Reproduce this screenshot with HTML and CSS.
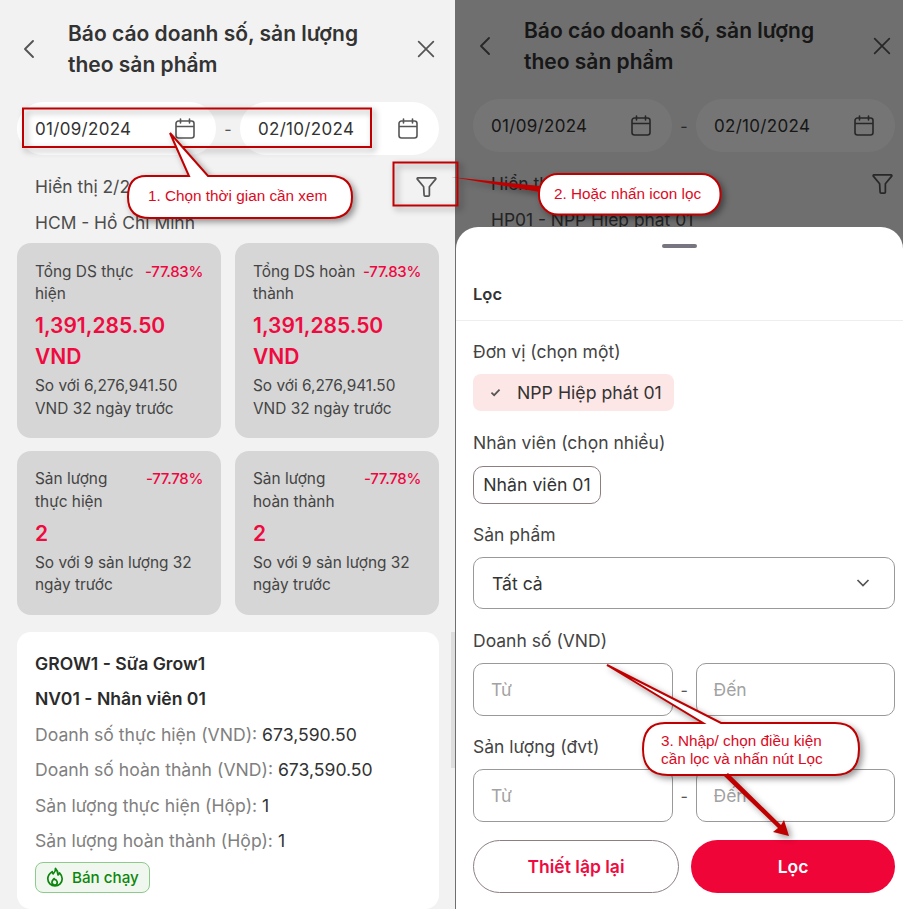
FILE: index.html
```html
<!DOCTYPE html>
<html lang="en">
<head>
    <meta charset="UTF-8">
    <meta name="viewport" content="width=device-width, initial-scale=1.0">
    <title>Báo cáo doanh số, sản lượng theo sản phẩm</title>
    <link rel="stylesheet" href="styles.css">
</head>
<body>
    <svg width="0" height="0" class="icon-defs">
        <defs>
            <symbol id="i-back" viewBox="0 0 24 24"><path d="M15 4 7 12l8 8" fill="none" stroke="currentColor" stroke-width="1.9" stroke-linecap="round" stroke-linejoin="round"/></symbol>
            <symbol id="i-close" viewBox="0 0 24 24"><path d="M4 4 20 20M20 4 4 20" fill="none" stroke="currentColor" stroke-width="1.9" stroke-linecap="round"/></symbol>
            <symbol id="i-cal" viewBox="0 0 22 22"><path d="M4.5 3h13A2.5 2.5 0 0 1 20 5.500v12a2.500 2.500 0 0 1-2.500 2.500h-13A2.500 2.500 0 0 1 2 17.500v-12A2.500 2.500 0 0 1 4.500 3ZM2 8.500h18M6.500 1v4M15.500 1v4" fill="none" stroke="currentColor" stroke-width="1.6" stroke-linecap="round"/></symbol>
            <symbol id="i-filter" viewBox="0 0 24 24"><path d="M3 3h18a.8.8 0 0 1 .6 1.300L15 12.200V21a1 1 0 0 1-1 1h-3.500a1 1 0 0 1-1-.9l-.5-8.900L2.400 4.300A.8.8 0 0 1 3 3Z" fill="none" stroke="currentColor" stroke-width="1.8" stroke-linejoin="round"/></symbol>
        </defs>
    </svg>

    <div class="page">
        <!-- left phone -->
        <section class="phone phone-left">
            <header class="top">
                <svg class="icon-back"><use href="#i-back"/></svg>
                <h1>Báo cáo doanh số, sản lượng theo sản phẩm</h1>
                <svg class="icon-close"><use href="#i-close"/></svg>
            </header>
            <div class="dates">
                <div class="date">01/09/2024 <svg class="icon-cal"><use href="#i-cal"/></svg></div>
                <span class="dash">-</span>
                <div class="date">02/10/2024 <svg class="icon-cal"><use href="#i-cal"/></svg></div>
            </div>
            <div class="info">
                <div class="info-row">Hiển thị 2/2 <svg class="icon-filter"><use href="#i-filter"/></svg></div>
                <div class="info-row">HCM - Hồ Chí Minh</div>
            </div>

            <div class="stats">
                <div class="stat">
                    <div class="stat-top"><span>Tổng DS thực hiện</span><b>-77.83%</b></div>
                    <div class="stat-val">1,391,285.50 VND</div>
                    <p>So với 6,276,941.50 VND 32 ngày trước</p>
                </div>
                <div class="stat">
                    <div class="stat-top"><span>Tổng DS hoàn thành</span><b>-77.83%</b></div>
                    <div class="stat-val">1,391,285.50 VND</div>
                    <p>So với 6,276,941.50 VND 32 ngày trước</p>
                </div>
                <div class="stat">
                    <div class="stat-top"><span>Sản lượng thực hiện</span><b>-77.78%</b></div>
                    <div class="stat-val">2</div>
                    <p>So với 9 sản lượng 32 ngày trước</p>
                </div>
                <div class="stat">
                    <div class="stat-top"><span>Sản lượng hoàn thành</span><b>-77.78%</b></div>
                    <div class="stat-val">2</div>
                    <p>So với 9 sản lượng 32 ngày trước</p>
                </div>
            </div>

            <div class="product">
                <div class="product-title">GROW1 - Sữa Grow1</div>
                <div class="product-title">NV01 - Nhân viên 01</div>
                <div class="product-row"><span>Doanh số thực hiện (VND):</span> 673,590.50</div>
                <div class="product-row"><span>Doanh số hoàn thành (VND):</span> 673,590.50</div>
                <div class="product-row"><span>Sản lượng thực hiện (Hộp):</span> 1</div>
                <div class="product-row"><span>Sản lượng hoàn thành (Hộp):</span> 1</div>
                <div class="hot">
                    <svg class="icon-fire" viewBox="0 0 20 22"><path d="M10.500 1.500c.6 3-1 4.500-2.500 6-.6-.7-1-1.500-1.100-2.500C4 7 2 9.700 2 13a8 8 0 0 0 16 0c0-3-1.500-5-3-6.500-.4 1-.9 1.700-1.600 2.200-.3-3-1.100-5.600-2.900-7.200ZM10 20c-2 0-3.400-1.500-3.400-3.300 0-1.600 1.400-2.700 2.400-4 .4 1.100 1 1.500 1.800 1.200.4 1 1.700 1.600 1.700 3 0 1.700-1 3.100-2.500 3.100Z" fill="none" stroke="currentColor" stroke-width="1.900" stroke-linejoin="round"/></svg>
                    Bán chạy
                </div>
            </div>
            <div class="scrollbar"></div>
        </section>

        <!-- right phone, filter sheet open -->
        <section class="phone phone-right">
            <header class="top">
                <svg class="icon-back"><use href="#i-back"/></svg>
                <h1>Báo cáo doanh số, sản lượng theo sản phẩm</h1>
                <svg class="icon-close"><use href="#i-close"/></svg>
            </header>
            <div class="dates">
                <div class="date">01/09/2024 <svg class="icon-cal"><use href="#i-cal"/></svg></div>
                <span class="dash">-</span>
                <div class="date">02/10/2024 <svg class="icon-cal"><use href="#i-cal"/></svg></div>
            </div>
            <div class="info">
                <div class="info-row">Hiển thị 2/2 <svg class="icon-filter"><use href="#i-filter"/></svg></div>
                <div class="info-row">HP01 - NPP Hiệp phát 01</div>
            </div>
            <div class="dim"></div>

            <div class="sheet">
                <div class="handle"></div>
                <div class="sheet-title">Lọc</div>
                <div class="sheet-body">
                    <label class="lbl">Đơn vị (chọn một)</label>
                    <div class="chip-on">
                        <svg class="icon-check" viewBox="0 0 12 10"><path d="M1.500 5.200 4.500 8l6-6.200" fill="none" stroke="currentColor" stroke-width="1.900"/></svg>
                        NPP Hiệp phát 01
                    </div>
                    <label class="lbl">Nhân viên (chọn nhiều)</label>
                    <div class="chip">Nhân viên 01</div>
                    <label class="lbl">Sản phẩm</label>
                    <div class="select">Tất cả
                        <svg class="icon-down" viewBox="0 0 14 8"><path d="M1.500 1 7 6.500 12.500 1" fill="none" stroke="currentColor" stroke-width="1.700"/></svg>
                    </div>
                    <label class="lbl">Doanh số (VND)</label>
                    <div class="range"><div class="field">Từ</div><span class="dash">-</span><div class="field">Đến</div></div>
                    <label class="lbl">Sản lượng (đvt)</label>
                    <div class="range"><div class="field">Từ</div><span class="dash">-</span><div class="field">Đến</div></div>
                    <div class="actions">
                        <button class="btn-reset">Thiết lập lại</button>
                        <button class="btn-apply">Lọc</button>
                    </div>
                </div>
            </div>
        </section>

        <!-- red annotations drawn over both screenshots -->
        <svg class="marks" viewBox="0 0 903 909">
            <rect x="23" y="108.500" width="348" height="38.500"/>
            <rect x="393.500" y="162.500" width="64" height="43"/>
            <path d="M146 176H189L170 133 208 176H330Q352 176 352 197 352 218 330 218H150Q128 218 128 197 128 176 146 176Z"/>
            <path class="solid" d="M451 177 540 186V192Z"/>
            <rect class="box" x="539" y="174" width="181.500" height="40.500" rx="19"/>
            <path d="M665 723H703L607 665 721 723H835Q859 723 859 749 859 775 835 775H668Q643 775 643 749 643 723 665 723Z"/>
            <path class="solid" d="M724 776 728 773 781 825 784 820 789 836 773 832 778 828Z"/>
        </svg>
        <div class="note note-1">1. Chọn thời gian cần xem</div>
        <div class="note note-2">2. Hoặc nhấn icon lọc</div>
        <div class="note note-3">3. Nhập/ chọn điều kiện<br>cần lọc và nhấn nút Lọc</div>
    </div>
</body>
</html>
```

FILE: styles.css
```css
body {
    margin: 0;
    color: #333;
    font-family: "Inter", "Noto Sans", sans-serif;
    font-size: 16px;
    background: #f2f2f2;
}

.icon-defs {
    position: absolute;
}

.page {
    position: relative;
    display: flex;
    width: 903px;
    height: 909px;
    overflow: hidden;
}

.phone {
    position: relative;
    box-sizing: border-box;
    height: 909px;
    overflow: hidden;
    background: #f2f2f2;
}

.phone-left {
    width: 455px;
    padding: 17px 16px 0 17px;
}

.phone-right {
    width: 448px;
    padding: 14px 8px 0 18px;
}

.top {
    display: flex;
    align-items: center;
    height: 63px;
}

.top h1 {
    flex: 1;
    margin: 0 12px 0 26px;
    font-size: 21px;
    line-height: 31px;
    font-weight: 600;
    color: #333;
}

.icon-back {
    width: 24px;
    height: 24px;
    margin-left: 1px;
    color: #555;
    flex: none;
}

.icon-close {
    width: 22px;
    height: 22px;
    margin-right: 2px;
    color: #555;
    flex: none;
}

.dates {
    display: flex;
    align-items: center;
    gap: 8px;
    margin-top: 22px;
}

.dates .dash {
    width: 8px;
    text-align: center;
    color: #555;
}

.date {
    flex: 1;
    display: flex;
    align-items: center;
    justify-content: space-between;
    height: 53px;
    padding: 0 20px 0 18px;
    border-radius: 27px;
    background: #fff;
    font-size: 17px;
    letter-spacing: 0.3px;
}

.icon-cal {
    width: 22px;
    height: 22px;
    color: #555;
}

.info {
    margin-top: 13px;
    padding-left: 18px;
    font-size: 17.400px;
    color: #4d4d4d;
}

.info-row {
    display: flex;
    align-items: center;
    justify-content: space-between;
    height: 36px;
}

.icon-filter {
    width: 23px;
    height: 23px;
    margin-right: 1px;
    color: #555;
}

.stats {
    display: grid;
    grid-template-columns: 204px 204px;
    gap: 13px 14px;
    margin-top: 3px;
}

.stat {
    box-sizing: border-box;
    padding: 17.500px 18px 18px;
    border-radius: 14px;
    background: #d6d6d6;
    font-size: 15.400px;
    line-height: 22.300px;
    color: #444;
}

.stat-top {
    display: flex;
    justify-content: space-between;
    gap: 4px;
}

.stat-top b {
    flex: none;
    font-size: 15px;
    font-weight: 500;
    letter-spacing: -0.3px;
    color: #f0063f;
}

.stat-val {
    margin: 5px 0 3.200px;
    font-size: 21px;
    line-height: 31px;
    font-weight: 600;
    color: #ef0a3f;
}

.stat p {
    margin: 0;
}

.product {
    margin-top: 17px;
    padding: 14px 18px 16px;
    border-radius: 14px;
    background: #fff;
    font-size: 17.600px;
}

.product-title {
    height: 35.500px;
    line-height: 35.500px;
    font-weight: 600;
    color: #2b2b2b;
}

.product-row {
    height: 35.500px;
    line-height: 35.500px;
    white-space: nowrap;
}

.product-row span {
    color: #808080;
}

.hot {
    display: inline-flex;
    align-items: center;
    gap: 8px;
    height: 29px;
    margin-top: 3px;
    padding: 0 10px;
    border: 1.500px solid #8ccb8c;
    border-radius: 8px;
    background: #f0f7ee;
    font-size: 15.200px;
    font-weight: 500;
    color: #0c860c;
}

.icon-fire {
    width: 18px;
    height: 20px;
}

.scrollbar {
    position: absolute;
    left: 451px;
    top: 632px;
    width: 4px;
    height: 136px;
    background: #dedede;
}

.dim {
    position: absolute;
    inset: 0;
    background: rgba(0, 0, 0, 0.54);
}

.sheet {
    position: absolute;
    left: 1px;
    right: 0;
    top: 227px;
    bottom: 0;
    border-radius: 22px 22px 0 0;
    background: #fff;
}

.handle {
    width: 35px;
    height: 4px;
    margin: 17px auto 0;
    border-radius: 2px;
    background: #77757f;
}

.sheet-title {
    box-sizing: border-box;
    height: 73px;
    padding: 34px 17px 0;
    border-bottom: 1px solid #eee;
    line-height: 24px;
    font-size: 16.500px;
    font-weight: 600;
}

.sheet-body {
    padding: 19px 8px 0 17px;
}

.lbl {
    display: block;
    height: 24px;
    line-height: 24px;
    font-size: 17.500px;
    color: #444;
}

.chip-on {
    display: inline-flex;
    align-items: center;
    gap: 16px;
    box-sizing: border-box;
    height: 37px;
    width: 201px;
    margin: 10px 0 20px;
    padding-left: 17px;
    border-radius: 8px;
    background: #fde6e6;
    font-size: 17.700px;
    white-space: nowrap;
}

.icon-check {
    width: 11px;
    height: 9px;
    color: #555;
    flex: none;
}

.chip {
    box-sizing: border-box;
    width: 128px;
    height: 38px;
    margin: 11px 0 19px;
    border: 1px solid #8e7f7f;
    border-radius: 10px;
    font-size: 17.700px;
    line-height: 36px;
    text-align: center;
}

.select {
    display: flex;
    align-items: center;
    justify-content: space-between;
    box-sizing: border-box;
    height: 52px;
    margin: 10px 0 20px;
    padding: 0 24px 0 18px;
    border: 1px solid #999;
    border-radius: 10px;
    font-size: 17.600px;
}

.icon-down {
    width: 14px;
    height: 8px;
    color: #555;
}

.range {
    display: flex;
    align-items: center;
    gap: 8px;
    margin: 10px 0 19px;
}

.range .dash {
    width: 7px;
    text-align: center;
    color: #555;
}

.field {
    flex: 1;
    box-sizing: border-box;
    height: 53px;
    padding-left: 17px;
    border: 1px solid #999;
    border-radius: 10px;
    line-height: 51px;
    font-size: 17.500px;
    color: #a2a2a2;
}

.actions {
    display: flex;
    gap: 12px;
    margin-top: -1px;
}

.actions button {
    flex: 1;
    height: 53px;
    border-radius: 27px;
    font-family: inherit;
    font-size: 17.500px;
    font-weight: 600;
}

.btn-reset {
    border: 1px solid #8e7f7f;
    background: #fff;
    color: #ef0a3f;
}

.btn-apply {
    border: none;
    background: #ef0538;
    color: #fff;
}

/* annotations */
.marks {
    position: absolute;
    left: 0;
    top: 0;
    width: 903px;
    height: 909px;
    filter: drop-shadow(3px 3px 3px rgba(0, 0, 0, 0.4));
}

.marks path,
.marks .box {
    fill: #fff;
    stroke: #c00000;
    stroke-width: 2;
}

.marks rect {
    fill: none;
    stroke: #c00000;
    stroke-width: 2;
}

.marks .solid {
    fill: #c00000;
    stroke: none;
}

.marks .box {
    fill: #fff;
}

.note {
    position: absolute;
    font-family: "Liberation Sans", sans-serif;
    font-size: 15.300px;
    line-height: 18px;
    color: #dc0a1e;
    white-space: nowrap;
}

.note-1 {
    left: 148px;
    top: 187px;
}

.note-2 {
    left: 554px;
    top: 185px;
}

.note-3 {
    left: 661px;
    top: 732px;
}
```
